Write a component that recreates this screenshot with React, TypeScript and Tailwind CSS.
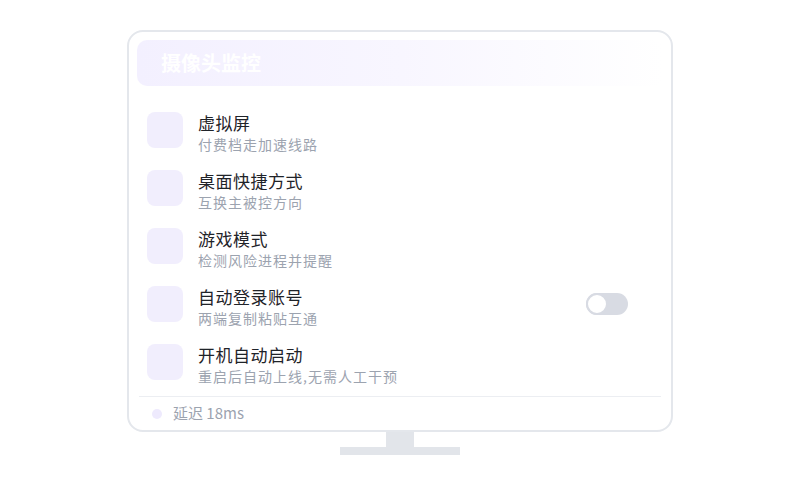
import React from "react";

const rows = [
  { t: "虚拟屏", s: "付费档走加速线路" },
  { t: "桌面快捷方式", s: "互换主被控方向" },
  { t: "游戏模式", s: "检测风险进程并提醒" },
  { t: "自动登录账号", s: "两端复制粘贴互通", toggle: true },
  { t: "开机自动启动", s: "重启后自动上线,无需人工干预" },
];

export default function App() {
  return (
    <div
      className="w-[800px] h-[500px] bg-white flex flex-col items-center pt-[30px]"
      style={{ fontFamily: '"Noto Sans CJK SC", "Noto Sans", sans-serif' }}
    >
      <div className="w-[546px] h-[402px] border-2 border-[#e4e7ec] rounded-[16px] pt-[8px] px-[8px] flex flex-col">
        <div className="h-[46px] rounded-[10px] bg-gradient-to-r from-[#f3f0ff] via-[#f8f6ff] to-white flex items-center pl-[24px]">
          <span className="text-white text-[20px] font-bold leading-none">摄像头监控</span>
        </div>
        <div className="mt-[15px] flex flex-col">
          {rows.map((r) => (
            <div key={r.t} className="h-[58px] flex items-start pt-[11px] pl-[10px] pr-[35px]">
              <div className="w-[36px] h-[36px] rounded-[8px] bg-[#f1eefd]" />
              <div className="ml-[15px] flex flex-col flex-1">
                <span className="text-[17px] leading-[22px] text-[#1f2329] tracking-[0.5px]">{r.t}</span>
                <span className="text-[14px] leading-[20px] text-[#9ca3af] tracking-[1px]">{r.s}</span>
              </div>
              {r.toggle && (
                <div className="mt-[7px] w-[42px] h-[22px] rounded-full bg-[#d8dbe3] flex items-center">
                  <div className="w-[22px] h-[22px] rounded-full bg-white border-2 border-[#d8dbe3]" />
                </div>
              )}
            </div>
          ))}
        </div>
        <div className="mt-[5px] mx-[2px] border-t border-[#eceef2]" />
        <div className="flex-1 flex items-center pl-[15px]">
          <div className="w-[10px] h-[10px] rounded-full bg-[#eeeafd]" />
          <span className="ml-[11px] text-[15px] text-[#9ca3af]">延迟 18ms</span>
        </div>
      </div>
      <div className="w-[28px] h-[15px] bg-[#e2e5ea]" />
      <div className="w-[120px] h-[8px] bg-[#e2e5ea]" />
    </div>
  );
}
